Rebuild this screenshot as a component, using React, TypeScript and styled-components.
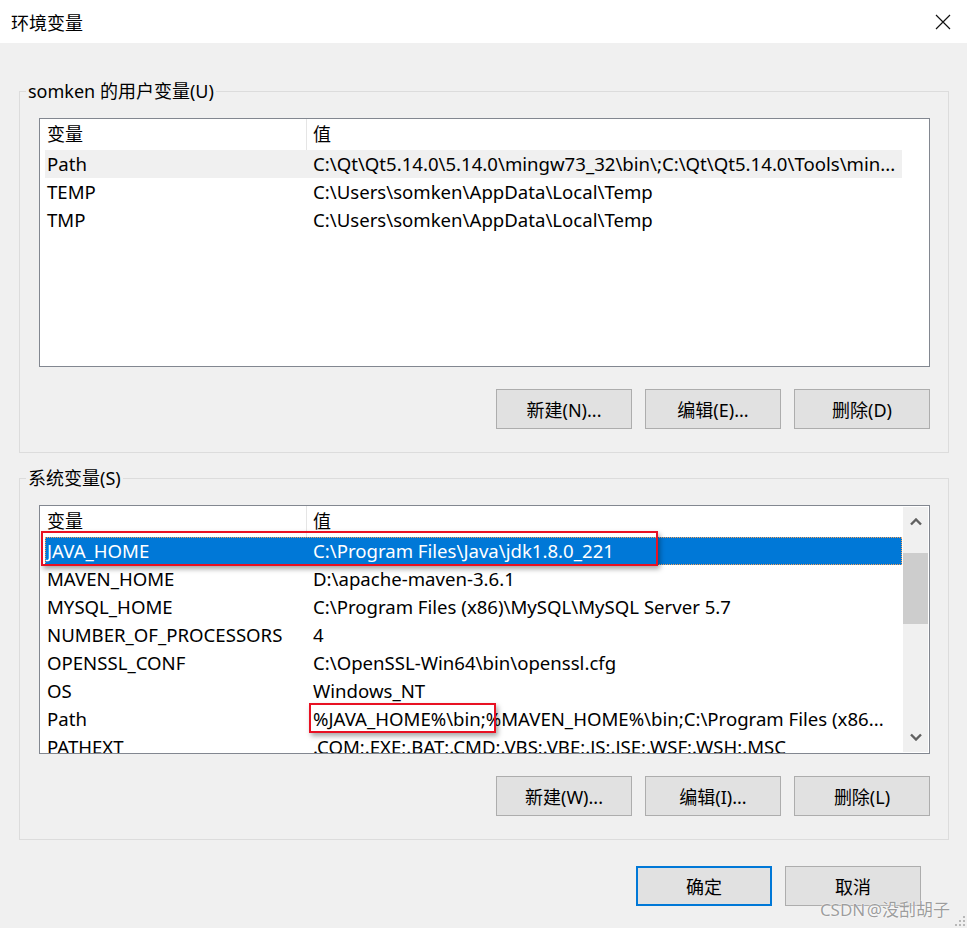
import React from "react"
import styled, { createGlobalStyle } from "styled-components"

const font = '"Noto Sans", "Noto Sans CJK SC", sans-serif'

const colors = {
  face: "#f0f0f0",
  groupLine: "#dcdcdc",
  listLine: "#828790",
  button: "#e1e1e1",
  buttonLine: "#adadad",
  accent: "#0078d7",
  soft: "#f0f0f0",
  thumb: "#cdcdcd",
  arrow: "#606060",
  mark: "#e81123",
}

type Mark = { left: number; top: number; width: number; height: number }
type Variable = {
  name: string
  value: string
  tone?: "active" | "soft"
  mark?: Mark
}

const userVars: Variable[] = [
  {
    name: "Path",
    value: "C:\\Qt\\Qt5.14.0\\5.14.0\\mingw73_32\\bin\\;C:\\Qt\\Qt5.14.0\\Tools\\min...",
    tone: "soft",
  },
  { name: "TEMP", value: "C:\\Users\\somken\\AppData\\Local\\Temp" },
  { name: "TMP", value: "C:\\Users\\somken\\AppData\\Local\\Temp" },
]

const systemVars: Variable[] = [
  {
    name: "JAVA_HOME",
    value: "C:\\Program Files\\Java\\jdk1.8.0_221",
    tone: "active",
    mark: { left: -4, top: -6, width: 617, height: 35 },
  },
  { name: "MAVEN_HOME", value: "D:\\apache-maven-3.6.1" },
  { name: "MYSQL_HOME", value: "C:\\Program Files (x86)\\MySQL\\MySQL Server 5.7" },
  { name: "NUMBER_OF_PROCESSORS", value: "4" },
  { name: "OPENSSL_CONF", value: "C:\\OpenSSL-Win64\\bin\\openssl.cfg" },
  { name: "OS", value: "Windows_NT" },
  {
    name: "Path",
    value: "%JAVA_HOME%\\bin;%MAVEN_HOME%\\bin;C:\\Program Files (x86...",
    mark: { left: 264, top: -2, width: 187, height: 30 },
  },
  { name: "PATHEXT", value: ".COM;.EXE;.BAT;.CMD;.VBS;.VBE;.JS;.JSE;.WSF;.WSH;.MSC" },
]

const GlobalStyle = createGlobalStyle`
  html, body {
    margin: 0;
    background: #fff;
  }
  body {
    font-family: ${font};
    font-size: 18px;
    color: #000;
  }
  * {
    box-sizing: border-box;
  }
`

//WINDOW

const Window = styled.div`
  position: relative;
  width: 967px;
  height: 928px;
  display: flex;
  flex-direction: column;
  overflow: hidden;
`

const TitleBar = styled.div`
  height: 43px;
  flex: none;
  display: flex;
  align-items: center;
  justify-content: space-between;
  padding: 0 16px 0 11px;
  background: #fff;
  font-size: 18px;
`

const Close = styled.button`
  width: 16px;
  height: 16px;
  padding: 0;
  border: none;
  background: none;
  display: flex;
`

const Body = styled.div`
  flex: 1;
  display: flex;
  flex-direction: column;
  gap: 13px;
  padding: 36px 18px 0 19px;
  background: ${colors.face};
`

// Group boxes

const Group = styled.fieldset`
  margin: 0;
  padding: 0;
  min-width: 0;
  border: 1px solid ${colors.groupLine};
`

const Legend = styled.legend`
  margin-left: 6px;
  padding: 0 2px;
  line-height: 24px;
  font-size: 18px;
`

const GroupInner = styled.div`
  display: flex;
  flex-direction: column;
  gap: 22px;
  padding: 15px 18px 23px 19px;
`

// List view

const ListBox = styled.div`
  height: 249px;
  display: flex;
  border: 1px solid ${colors.listLine};
  background: #fff;
`

const ListMain = styled.div`
  flex: 1;
  min-width: 0;
  padding-left: 5px;
  overflow: hidden;
  font-size: 18.6px;
`

const Columns = styled.div`
  display: grid;
  grid-template-columns: 261px 1fr;
`

const HeaderRow = styled(Columns)`
  height: 31px;
  align-items: stretch;
  line-height: 30px;
  font-size: 18px;
`

const HeaderCell = styled.div<{ $divided?: boolean }>`
  padding-left: ${(p) => (p.$divided ? "6px" : "2px")};
  ${(p) => p.$divided && `border-left: 1px solid #e5e5e5;`}
`

const Row = styled(Columns)<{ $tone?: "active" | "soft" }>`
  position: relative;
  height: 28px;
  line-height: 28px;
  white-space: nowrap;
  ${(p) => p.$tone === "soft" && `background: ${colors.soft};`}
  ${(p) =>
    p.$tone === "active" &&
    `background: ${colors.accent};
    color: #fff;
    outline: 1px dotted #f5a25c;
    outline-offset: -1px;`}
`

const NameCell = styled.div`
  padding-left: 2px;
  overflow: hidden;
`

const ValueCell = styled.div`
  padding-left: 7px;
  overflow: hidden;
`

// red annotation drawn over the screenshot
const MarkBox = styled.span<{ $m: Mark }>`
  position: absolute;
  left: ${(p) => p.$m.left}px;
  top: ${(p) => p.$m.top}px;
  width: ${(p) => p.$m.width}px;
  height: ${(p) => p.$m.height}px;
  border: 2px solid ${colors.mark};
  box-shadow: 2px 3px 5px rgba(0, 0, 0, 0.35);
  pointer-events: none;
`

const ScrollTrack = styled.div<{ $visible?: boolean }>`
  width: 25px;
  margin: 1px;
  display: flex;
  flex-direction: column;
  background: ${(p) => (p.$visible ? colors.face : "#fff")};
`

const ScrollArrow = styled.div`
  height: 30px;
  display: flex;
  align-items: center;
  justify-content: center;
`

const Trough = styled.div`
  flex: 1;
  padding-top: 16px;
`

const Thumb = styled.div`
  height: 71px;
  background: ${colors.thumb};
`

// Buttons

const ButtonRow = styled.div<{ $inset?: number }>`
  display: flex;
  justify-content: flex-end;
  gap: 13px;
  padding-right: ${(p) => p.$inset || 0}px;
`

const Button = styled.button<{ $default?: boolean }>`
  width: 136px;
  height: 40px;
  padding: 0;
  font-family: ${font};
  font-size: 18px;
  color: #000;
  background: ${colors.button};
  border: ${(p) => (p.$default ? `2px solid ${colors.accent}` : `1px solid ${colors.buttonLine}`)};
`

const Footer = styled(ButtonRow)`
  margin-top: 13px;
`

const Watermark = styled.div`
  position: absolute;
  right: 17px;
  bottom: 7px;
  font-size: 17px;
  word-spacing: -3px;
  color: rgba(140, 140, 140, 0.85);
  text-shadow: 0 0 2px #fff, 0 0 1px #fff;
  pointer-events: none;
  white-space: nowrap;
`

const Grip = styled.svg`
  position: absolute;
  right: 1px;
  bottom: 1px;
`

function Chevron({ down }: { down?: boolean }) {
  return (
    <svg width="12" height="8" viewBox="0 0 12 8">
      <polyline
        points={down ? "1,1.5 6,6.5 11,1.5" : "1,6.5 6,1.5 11,6.5"}
        fill="none"
        stroke={colors.arrow}
        strokeWidth="2.4"
      />
    </svg>
  )
}

function VariableList({ rows, scroll }: { rows: Variable[]; scroll?: boolean }) {
  return (
    <ListBox>
      <ListMain>
        <HeaderRow>
          <HeaderCell>变量</HeaderCell>
          <HeaderCell $divided>值</HeaderCell>
        </HeaderRow>
        {rows.map((r) => (
          <Row key={r.name + r.value} $tone={r.tone}>
            <NameCell>{r.name}</NameCell>
            <ValueCell>{r.value}</ValueCell>
            {r.mark && <MarkBox $m={r.mark} />}
          </Row>
        ))}
      </ListMain>
      <ScrollTrack $visible={scroll}>
        {scroll && (
          <>
            <ScrollArrow>
              <Chevron />
            </ScrollArrow>
            <Trough>
              <Thumb />
            </Trough>
            <ScrollArrow>
              <Chevron down />
            </ScrollArrow>
          </>
        )}
      </ScrollTrack>
    </ListBox>
  )
}

function VariableGroup({
  title,
  rows,
  scroll,
  buttons,
}: {
  title: string
  rows: Variable[]
  scroll?: boolean
  buttons: string[]
}) {
  return (
    <Group>
      <Legend>{title}</Legend>
      <GroupInner>
        <VariableList rows={rows} scroll={scroll} />
        <ButtonRow>
          {buttons.map((b) => (
            <Button key={b}>{b}</Button>
          ))}
        </ButtonRow>
      </GroupInner>
    </Group>
  )
}

export default function App() {
  return (
    <>
      <GlobalStyle />
      <Window>
        <TitleBar>
          <span>环境变量</span>
          <Close aria-label="关闭">
            <svg width="16" height="16" viewBox="0 0 16 16">
              <path d="M1 1 L15 15 M15 1 L1 15" stroke="#111" strokeWidth="1.2" />
            </svg>
          </Close>
        </TitleBar>
        <Body>
          <VariableGroup
            title="somken 的用户变量(U)"
            rows={userVars}
            buttons={["新建(N)...", "编辑(E)...", "删除(D)"]}
          />
          <VariableGroup
            title="系统变量(S)"
            rows={systemVars}
            scroll
            buttons={["新建(W)...", "编辑(I)...", "删除(L)"]}
          />
          <Footer $inset={28}>
            <Button $default>确定</Button>
            <Button>取消</Button>
          </Footer>
        </Body>
        <Watermark>CSDN @没刮胡子</Watermark>
        <Grip width="12" height="12" viewBox="0 0 12 12">
          {[
            [9, 1],
            [5, 5],
            [9, 5],
            [1, 9],
            [5, 9],
            [9, 9],
          ].map(([x, y]) => (
            <rect key={`${x}-${y}`} x={x} y={y} width="2" height="2" fill="#b8b8b8" />
          ))}
        </Grip>
      </Window>
    </>
  )
}
